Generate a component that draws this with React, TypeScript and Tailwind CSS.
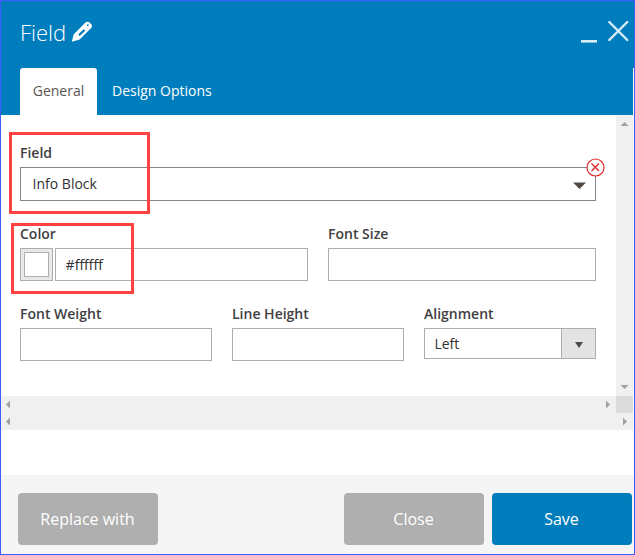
import type { ReactNode } from 'react';

/** Labelled form field: caption on top, control below. */
function FormField({
  label,
  className,
  children,
}: {
  label: string;
  className: string;
  children: ReactNode;
}) {
  return (
    <div className={className}>
      <div className="mb-1 h-5 text-sm leading-5 font-semibold whitespace-nowrap text-[#41403f]">
        {label}
      </div>
      {children}
    </div>
  );
}

function TextInput({ value = '' }: { value?: string }) {
  return (
    <input
      className="block h-[33px] w-full min-w-0 border border-[#adadad] bg-white px-[9.6px] text-sm text-[#303030] outline-none"
      defaultValue={value}
    />
  );
}

/** Scrollbar arrow, drawn pointing up and rotated into place. */
function Arrow({ className }: { className: string }) {
  return (
    <svg className={`h-[17px] w-[17px] shrink-0 fill-[#a0a0a0] ${className}`} viewBox="0 0 17 17">
      <path d="M4.5 11 8.5 7 12.5 11Z" />
    </svg>
  );
}

function PencilIcon() {
  return (
    <svg className="mt-0.5 ml-[5px] h-[22px] w-[22px]" viewBox="0 0 22 22">
      <path
        fill="#fff"
        fillRule="evenodd"
        d="M0.8 20.8 2.6 13.6 14.2 1.7Q16 0 17.8 1L20.4 3.3Q21.8 4.9 20.4 6.7L8.6 18.6ZM7.2 13.4 8.8 14.9 14.2 9.8 12.6 8.2ZM15.9 4.2a.9.9 0 1 0 1.8 0a.9.9 0 1 0-1.8 0Z"
      />
    </svg>
  );
}

function Header() {
  return (
    <header className="flex h-[114px] flex-col justify-between bg-[#007dbd] pl-[19px]">
      <div className="flex justify-between pr-0.5">
        <div className="flex pt-[18px] text-white">
          <h1 className="-mt-px text-[22px] leading-7 font-light">Field</h1>
          <PencilIcon />
        </div>
        <svg className="mt-[18px] h-6 w-[52px]" viewBox="0 0 52 24" fill="none" stroke="#d9edf7">
          <path strokeWidth="2.6" d="M1 22.3H17" />
          <path strokeWidth="2.4" strokeLinecap="round" d="M29.3 3 47.3 21M47.3 3 29.3 21" />
        </svg>
      </div>
      <nav className="flex h-[47px] border-r border-white text-sm leading-[46px]">
        <div className="w-[77px] rounded-t-[3px] bg-white text-center text-[#5a5652]">General</div>
        <div className="pl-[15px] font-medium text-white">Design Options</div>
      </nav>
    </header>
  );
}

function DesignForm() {
  return (
    <div className="relative flex-1 pt-7 pl-[19px]">
      <FormField label="Field" className="relative w-[576px]">
        <div className="flex h-[34px] items-center justify-between border border-[#858585] pr-[9px] pl-[11.6px] text-sm text-[#303030]">
          <span>Info Block</span>
          <svg className="mt-[2px] h-[7px] w-[13px]" viewBox="0 0 13 7">
            <path fill="#514943" d="M0 .5H13L6.5 7Z" />
          </svg>
        </div>
        <svg
          className="absolute top-[15px] right-[-9px] h-[19px] w-[19px]"
          viewBox="0 0 19 19"
          fill="#fff"
          stroke="#e22626"
        >
          <circle cx="9.5" cy="9.5" r="8.5" strokeWidth="1.2" />
          <path strokeWidth="1.4" d="M5.5 5.5 13 13M13 5.5 5.5 13" />
        </svg>
      </FormField>

      <div className="mt-[23px] flex gap-5">
        <FormField label="Color" className="w-[288px]">
          <div className="flex gap-0.5">
            <div className="h-[33px] w-[33px] shrink-0 border border-[#adadad] bg-[#e8e8e8] p-[3px]">
              <div className="h-[25px] w-[25px] border border-[#adadad] bg-white" />
            </div>
            <TextInput value="#ffffff" />
          </div>
        </FormField>
        <FormField label="Font Size" className="w-[268px]">
          <TextInput />
        </FormField>
      </div>

      <div className="mt-[23px] flex gap-5">
        <FormField label="Font Weight" className="w-48">
          <TextInput />
        </FormField>
        <FormField label="Line Height" className="w-[172px]">
          <TextInput />
        </FormField>
        <FormField label="Alignment" className="w-[172px]">
          <div className="flex h-[31px] border border-[#adadad] text-sm leading-[29px] text-[#303030]">
            <span className="flex-1 pl-[9.4px]">Left</span>
            <span className="flex w-[34px] items-center justify-center border-l border-[#adadad] bg-[#e3e3e3]">
              <svg className="mt-[3px] h-[6px] w-2" viewBox="0 0 8 6">
                <path fill="#514943" d="M0 0H8L4 6Z" />
              </svg>
            </span>
          </div>
        </FormField>
      </div>

      {/* Callout frames over the highlighted fields */}
      <div className="pointer-events-none absolute top-[17px] left-2 h-[82px] w-[141px] border-3 border-[#ff4343]" />
      <div className="pointer-events-none absolute top-[108px] left-2.5 h-[71px] w-[123px] border-3 border-[#ff4343]" />
    </div>
  );
}

function Button({ label, className }: { label: string; className: string }) {
  return (
    <button className={`h-[52px] w-[140px] rounded pr-px text-base text-white ${className}`}>
      {label}
    </button>
  );
}

export default function App() {
  return (
    <div className="flex h-[555px] w-[635px] flex-col border border-[#405cff] bg-white font-['Open_Sans',sans-serif]">
      <Header />
      <div className="flex h-[281px] pr-px">
        <DesignForm />
        <div className="flex w-[17px] flex-col justify-between bg-[#f0f0f0]">
          <Arrow className="" />
          <Arrow className="rotate-180" />
        </div>
      </div>
      <div className="mr-px flex h-[17px] bg-[#f0f0f0]">
        <Arrow className="-ml-0.5 -rotate-90" />
        <div className="flex-1" />
        <Arrow className="translate-x-px rotate-90" />
        <div className="w-[17px] bg-[#dcdcdc]" />
      </div>
      <div className="mr-px flex h-[17px] justify-between bg-[#f0f0f0]">
        <Arrow className="-ml-0.5 -rotate-90" />
        <Arrow className="-mr-px rotate-90" />
      </div>
      <footer className="mt-[45px] flex flex-1 gap-2 bg-[#f5f5f5] pt-[18px] pr-0.5 pl-[17px]">
        <Button label="Replace with" className="mr-auto bg-[#afafaf]" />
        <Button label="Close" className="bg-[#afafaf]" />
        <Button label="Save" className="bg-[#007dbd]" />
      </footer>
    </div>
  );
}
